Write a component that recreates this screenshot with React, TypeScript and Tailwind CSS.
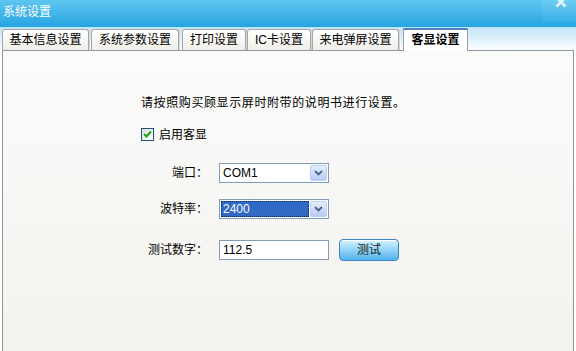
import React from "react";

const font = { fontFamily: '"Liberation Sans", "Noto Sans CJK SC", sans-serif' };

function Chevron() {
  return (
    <svg width="9" height="6" viewBox="0 0 9 6">
      <path d="M1 1 L4.5 4.5 L8 1" fill="none" stroke="#4d6185" strokeWidth="1.8" />
    </svg>
  );
}

function DropBtn() {
  return (
    <div className="w-[17px] h-[16px] mr-[1px] rounded-[2px] border border-[#b9cff7] bg-linear-to-b from-[#e6eefe] to-[#b8cbf3] flex items-center justify-center">
      <Chevron />
    </div>
  );
}

function Tab({ label, w, ml, active }: { label: string; w: string; ml: string; active?: boolean }) {
  if (active) {
    return (
      <div
        className={`${w} ${ml} h-[23px] -mb-[1px] relative z-10 bg-white border border-[#9aa0a6] border-b-0 rounded-t-[3px] flex flex-col`}
      >
        <div className="h-[2px] -mx-[1px] -mt-[1px] rounded-t-[3px] bg-[#4a82c4]" />
        <div className="flex-1 flex items-center justify-center text-[12px] font-bold text-black pb-[1px]">
          {label}
        </div>
      </div>
    );
  }
  return (
    <div
      className={`${w} ${ml} h-[21px] border border-[#a3a7ab] border-b-0 rounded-t-[3px] bg-linear-to-b from-[#ffffff] to-[#efeee8] flex items-center justify-center text-[12px] text-black shadow-[1px_0_0_#d6d6d0]`}
    >
      {label}
    </div>
  );
}

export default function App() {
  return (
    <div className="w-[576px] h-[351px] flex flex-col overflow-hidden bg-white" style={font}>
      {/* title bar */}
      <div className="h-[27px] bg-linear-to-b from-[#5ec5f0] to-[#22a4e1] flex items-start justify-between">
        <div className="ml-[3px] mt-[6px] text-[12px] leading-[12px] text-white">系统设置</div>
        <div className="w-[34px] h-[22px] bg-linear-to-b from-[#6ccbf2] to-[#35afe6] flex justify-center">
          <svg width="12" height="12" viewBox="0 0 12 12" className="-mt-[4px] ml-[3px]">
            <path d="M1.5 1.5 L10.5 10.5 M10.5 1.5 L1.5 10.5" stroke="#e4f2f9" strokeWidth="2.6" />
          </svg>
        </div>
      </div>
      {/* tab strip */}
      <div className="h-[23px] bg-linear-to-b from-[#bfe4f7] to-[#fbfdfe] flex items-end pt-[1px]">
        <Tab label="基本信息设置" w="w-[87px]" ml="ml-[2px]" />
        <Tab label="系统参数设置" w="w-[88px]" ml="ml-[2px]" />
        <Tab label="打印设置" w="w-[64px]" ml="ml-[3px]" />
        <Tab label="IC卡设置" w="w-[64px]" ml="ml-[1px]" />
        <Tab label="来电弹屏设置" w="w-[87px]" ml="ml-[1px]" />
        <Tab label="客显设置" w="w-[65px]" ml="ml-[4px]" active />
      </div>
      {/* panel */}
      <div className="flex-1 ml-[2px] mr-[2px] border border-b-0 border-[#8f9aa0] bg-linear-to-b from-[#fbfbfa] to-[#f3f2ee] pl-[138px] pt-[46px] text-[12px] text-black">
        <div className="leading-[12px] tracking-[0.6px]">请按照购买顾显示屏时附带的说明书进行设置。</div>
        <div className="mt-[19px] flex items-center h-[13px]">
          <div className="w-[13px] h-[13px] border border-[#1c5180] bg-linear-to-br from-[#dcdcd6] to-white flex items-center justify-center">
            <svg width="9" height="9" viewBox="0 0 9 9">
              <path d="M1 4 L3.5 6.5 L8 1.5" fill="none" stroke="#21a121" strokeWidth="2" />
            </svg>
          </div>
          <span className="ml-[5px] leading-[12px]">启用客显</span>
        </div>
        <div className="mt-[22px] flex items-center h-[20px]">
          <div className="w-[67px] text-right leading-[12px]">端口：</div>
          <div className="ml-[11px] w-[110px] h-[20px] border border-[#7f9db9] bg-white flex items-center">
            <div className="flex-1 pl-[3px] leading-[12px]">COM1</div>
            <DropBtn />
          </div>
        </div>
        <div className="mt-[16px] flex items-center h-[20px]">
          <div className="w-[67px] text-right leading-[12px]">波特率：</div>
          <div className="ml-[11px] w-[110px] h-[20px] border border-[#7f9db9] bg-white flex items-center">
            <div className="flex-1 ml-[1px] mr-[1px] h-[16px] bg-[#316ac5] border border-dotted border-[#0d2a5a] flex items-center pl-[1px] text-white leading-[12px]">
              2400
            </div>
            <DropBtn />
          </div>
        </div>
        <div className="mt-[20px] flex items-center h-[22px]">
          <div className="w-[67px] text-right leading-[12px]">测试数字：</div>
          <div className="ml-[11px] w-[110px] h-[20px] border border-[#7f9db9] bg-white flex items-center pl-[3px] leading-[12px]">
            112.5
          </div>
          <div className="ml-[10px] w-[60px] h-[22px] rounded-[4px] border border-[#3d86c6] bg-linear-to-b from-[#d8f2ff] via-[#93d4f7] to-[#4fb1ec] shadow-[inset_0_1px_0_#ffffff] flex items-center justify-center leading-[12px] text-[#1a1a1a]">
            测试
          </div>
        </div>
      </div>
    </div>
  );
}
